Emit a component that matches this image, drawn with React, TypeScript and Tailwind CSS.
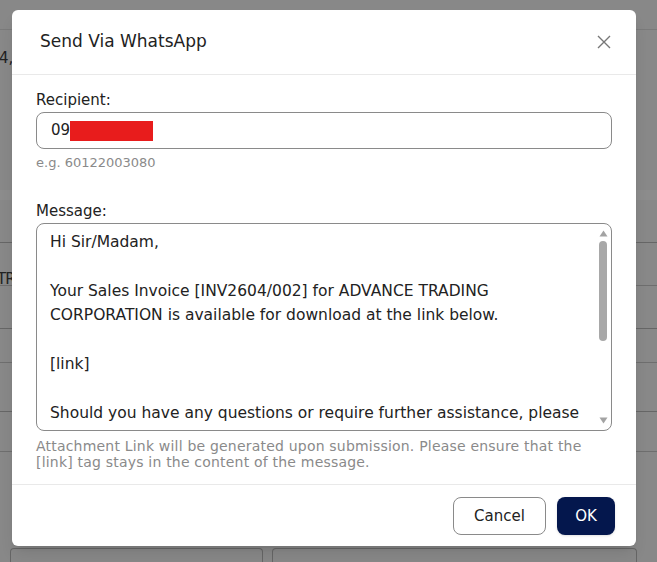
import React from "react"

const message = `Hi Sir/Madam,

Your Sales Invoice [INV2604/002] for ADVANCE TRADING CORPORATION is available for download at the link below.

[link]

Should you have any questions or require further assistance, please do not hesitate to contact us.

Thank you.

Best regards,
ADVANCE TRADING CORPORATION`

function BackgroundPage() {
  return (
    <div className="flex h-[562px] flex-col bg-[#888888] text-[15px] text-[#222]">
      <div className="h-[30px] border-b border-[#7a7a7a]" />
      <div className="flex h-[160px] items-start pt-[17px]">
        <span className="-ml-[1px]">4,</span>
      </div>
      <div className="h-[10px] bg-[#8c8c8c]" />
      <div className="h-[43px] border-b border-[#666]" />
      <div className="flex h-[43px] items-center border-b border-[#6e6e6e] pt-[30px]">
        <span className="-ml-[3px] tracking-[-1px]">TR</span>
      </div>
      <div className="h-[43px] border-b border-[#666]" />
      <div className="h-[34px] border-b border-[#6e6e6e]" />
      <div className="h-[49px] border-b border-[#666]" />
      <div className="h-[40px] border-b border-[#6e6e6e]" />
      <div className="flex flex-1 gap-[9px] pl-[10px] pr-[20px] pt-[96px]">
        <div className="w-[253px] rounded-t border-x border-t border-[#666]" />
        <div className="flex-1 rounded-t border-x border-t border-[#666]" />
      </div>
    </div>
  )
}

function FakeScrollbar() {
  return (
    <div className="pointer-events-none absolute right-[4px] top-[6px] bottom-[6px] flex w-[10px] flex-col items-center">
      <svg width="9" height="7" viewBox="0 0 9 7" className="mt-[1px] shrink-0">
        <path d="M4.5 0.5L8.5 6.5H0.5Z" fill="#a3a3a3" />
      </svg>
      <div className="mt-[4px] h-[100px] w-[8px] shrink-0 rounded-full bg-[#a8a8a8]" />
      <div className="flex-1" />
      <svg width="9" height="7" viewBox="0 0 9 7" className="mb-[1px] shrink-0">
        <path d="M4.5 6.5L8.5 0.5H0.5Z" fill="#a3a3a3" />
      </svg>
    </div>
  )
}

export default function App() {
  return (
    <div className="relative h-[562px] w-[657px] overflow-hidden font-['DejaVu_Sans',sans-serif]">
      <BackgroundPage />
      <div className="absolute inset-0">
        <div className="absolute left-[12px] top-[10px] w-[624px] rounded-md bg-white shadow-lg">
          <div className="flex h-[65px] items-center justify-between border-b border-[#e9e9e9] pl-[28px] pr-[24px]">
            <h2 className="text-[17px] text-[#222]">Send Via WhatsApp</h2>
            <button className="text-[#777]">
              <svg width="16" height="16" viewBox="0 0 16 16" fill="none" stroke="currentColor" strokeWidth="1.4">
                <path d="M2 2l12 12M14 2L2 14" />
              </svg>
            </button>
          </div>

          <div className="px-[24px] pt-[14px] pb-[14px]">
            <label className="block text-[15px] leading-[22px] text-[#222]">Recipient:</label>
            <div className="mt-[1px] flex h-[37px] items-center rounded-lg border border-[#8a8a8a] px-[14px] text-[15px] text-[#222]">
              <span>09</span>
              <span className="h-[20px] w-[83px] bg-[#e81c1c]" />
            </div>
            <p className="mt-[4px] text-[13px] leading-[20px] text-[#8a8a8a]">e.g. 60122003080</p>

            <label className="mt-[27px] block text-[15px] leading-[22px] text-[#222]">Message:</label>
            <div className="relative mt-[1px]">
              <textarea
                readOnly
                defaultValue={message}
                className="block h-[208px] w-full resize-none overflow-hidden rounded-lg border border-[#8a8a8a] py-[6px] pl-[13px] pr-[20px] text-[15.5px] leading-[24.4px] text-[#222] outline-none"
              />
              <FakeScrollbar />
            </div>
            <p className="mt-[7px] pr-[24px] text-[14px] leading-[16px] tracking-[0.2px] text-[#8a8a8a]">
              Attachment Link will be generated upon submission. Please ensure that the [link] tag stays in the content of the message.
            </p>
          </div>

          <div className="flex justify-end gap-[11px] border-t border-[#e9e9e9] px-[21px] pt-[12px] pb-[11px]">
            <button className="h-[38px] w-[93px] rounded-lg border border-[#8a8a8a] bg-white text-[15px] text-[#222]">
              Cancel
            </button>
            <button className="h-[38px] w-[58px] rounded-lg bg-[#04174d] text-[15px] text-white shadow">
              OK
            </button>
          </div>
        </div>
      </div>
    </div>
  )
}
